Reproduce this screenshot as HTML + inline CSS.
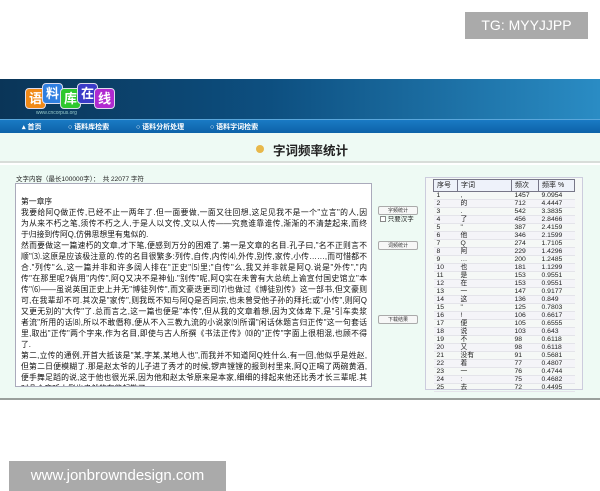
<!DOCTYPE html>
<html><head><meta charset="utf-8"><style>
*{margin:0;padding:0;box-sizing:border-box}
body{width:600px;height:480px;background:#fff;position:relative;overflow:hidden;font-family:"Liberation Sans","Noto Sans CJK SC",sans-serif}
.abs{position:absolute}
#tg{left:465px;top:12px;width:123px;height:27px;background:#aaa;color:#fff;font-size:14px;line-height:27px;text-align:center}
#ft{left:9px;top:461px;width:217px;height:30px;background:#aaa;color:#fff;font-size:15px;line-height:30px;text-align:center}
#hdr{left:0;top:79px;width:600px;height:40px;background:linear-gradient(90deg,#0a3558 0%,#0d4f80 45%,#2a8cc4 100%)}
#nav{left:0;top:119px;width:600px;height:14px;background:linear-gradient(#1a7ac4,#0d62a8);border-top:1px solid #5aa7dc}
#nav span{position:absolute;top:2px;font-size:7px;color:#fff;font-weight:bold}
#tband{left:0;top:133px;width:600px;height:30px;background:#eefaf4;border-bottom:2px solid #d8ddd9}
#main{left:0;top:165px;width:600px;height:235px;background:#eefaf4;border-bottom:2px solid #9aa09c}
.sq{position:absolute;width:21px;height:21px;border-radius:4px;color:#fff;font-size:13px;text-align:center;line-height:20px;font-weight:bold;border:1px solid #dde}
#ta{left:15px;top:183px;width:357px;height:204px;background:#fff;border:1px solid #aab;overflow:hidden;padding:12px 4px 0 5px;font-size:7.8px;line-height:11px;color:#111}
#ta div{white-space:nowrap;text-align:justify;text-align-last:justify;overflow:hidden}
#ta div.s{text-align-last:left}
.btn{position:absolute;left:378px;width:40px;height:9px;background:#f7f7f7;border:1px solid #aaa;border-radius:2px;font-size:5px;line-height:8px;text-align:center;color:#333}
#tp{left:425px;top:177px;width:158px;height:213px;border:1px solid #ccd;background:#f5f8f6}
table{position:absolute;left:433px;top:179px;width:142px;border-collapse:collapse;font-size:6.8px;color:#222}
td,th{height:8px;line-height:7px;padding:0 0 0 3px;border-bottom:1px solid #e4e4ea;text-align:left;font-weight:normal;white-space:nowrap}
th{height:12px;background:#eef2fa;border:1px solid #778;font-size:7px}
tr:nth-child(odd) td{background:#f4f4f8}
</style></head><body>
<div id="tg" class="abs">TG: MYYJJPP</div>
<div id="hdr" class="abs">
<div class="sq" style="left:25px;top:9px;background:#f08a18">语</div>
<div class="sq" style="left:42px;top:4px;background:#2f7fe0">料</div>
<div class="sq" style="left:60px;top:9px;background:#2ec82e">库</div>
<div class="sq" style="left:77px;top:4px;background:#3b3bc8">在</div>
<div class="sq" style="left:94px;top:9px;background:#b02ad0">线</div>
<div class="abs" style="left:36px;top:31px;font-size:5px;color:#9cc">www.cncorpus.org</div>
</div>
<div id="nav" class="abs"><span style="left:22px">▴ 首页</span><span style="left:68px">○ 语料库检索</span><span style="left:136px">○ 语料分析处理</span><span style="left:210px">○ 语料字词检索</span></div>
<div id="tband" class="abs"><div class="abs" style="left:256px;top:12px;width:8px;height:8px;border-radius:50%;background:#e8b84a"></div><div class="abs" style="left:273px;top:7px;font-size:12.5px;font-weight:bold;color:#222">字词频率统计</div></div>
<div id="main" class="abs"></div>
<div class="abs" style="left:16px;top:173px;font-size:6.5px;color:#222">文字内容（最长100000字）：　共 22077 字符</div>
<div id="ta" class="abs">
<div class="s">第一章序</div>
<div>我要给阿Q做正传,已经不止一两年了.但一面要做,一面又往回想,这足见我不是一个"立言"的人,因</div>
<div>为从来不朽之笔,须传不朽之人,于是人以文传,文以人传——究竟谁靠谁传,渐渐的不清楚起来,而终</div>
<div class="s">于归接到传阿Q,仿佛思想里有鬼似的.</div>
<div>然而要做这一篇速朽的文章,才下笔,便感到万分的困难了.第一是文章的名目.孔子曰,"名不正则言不</div>
<div>顺"⑶.这原是应该极注意的.传的名目很繁多:列传,自传,内传⑷,外传,别传,家传,小传……,而可惜都不</div>
<div>合."列传"么,这一篇并非和许多阔人排在"正史"⑸里;"自传"么,我又并非就是阿Q.说是"外传","内</div>
<div>传"在那里呢?倘用"内传",阿Q又决不是神仙."别传"呢,阿Q实在未曾有大总统上谕宣付国史馆立"本</div>
<div>传"⑹——虽说英国正史上并无"博徒列传",而文豪迭更司⑺也做过《博徒别传》这一部书,但文豪则</div>
<div>可,在我辈却不可.其次是"家传",则我既不知与阿Q是否同宗,也未曾受他子孙的拜托;或"小传",则阿Q</div>
<div>又更无别的"大传"了.总而言之,这一篇也便是"本传",但从我的文章着想,因为文体卑下,是"引车卖浆</div>
<div>者流"所用的话⑻,所以不敢僭称,便从不入三教九流的小说家⑼所谓"闲话休题言归正传"这一句套话</div>
<div>里,取出"正传"两个字来,作为名目,即使与古人所撰《书法正传》⑽的"正传"字面上很相混,也顾不得</div>
<div class="s">了.</div>
<div>第二,立传的通例,开首大抵该是"某,字某,某地人也",而我并不知道阿Q姓什么.有一回,他似乎是姓赵,</div>
<div>但第二日便模糊了.那是赵太爷的儿子进了秀才的时候,锣声镗镗的报到村里来,阿Q正喝了两碗黄酒,</div>
<div>便手舞足蹈的说,这于他也很光采,因为他和赵太爷原来是本家,细细的排起来他还比秀才长三辈呢.其</div>
<div class="s">时几个旁听人倒也肃然的有些起敬了.</div>
</div>
<div class="btn" style="top:206px">字频统计</div>
<div class="abs" style="left:380px;top:213px;font-size:6.5px;color:#222"><span style="display:inline-block;width:6px;height:6px;border:1px solid #888;background:#fff;vertical-align:-1px"></span> 只要汉字</div>
<div class="btn" style="top:241px">词频统计</div>
<div class="btn" style="top:315px">下载结果</div>
<div id="tp" class="abs"></div>
<table>
<tr><th style="width:24px">序号</th><th style="width:54px">字词</th><th style="width:27px">频次</th><th>频率 %</th></tr>
<tr><td>1</td><td>,</td><td>1457</td><td>9.0954</td></tr>
<tr><td>2</td><td>的</td><td>712</td><td>4.4447</td></tr>
<tr><td>3</td><td>.</td><td>542</td><td>3.3835</td></tr>
<tr><td>4</td><td>了</td><td>456</td><td>2.8466</td></tr>
<tr><td>5</td><td>"</td><td>387</td><td>2.4159</td></tr>
<tr><td>6</td><td>他</td><td>346</td><td>2.1599</td></tr>
<tr><td>7</td><td>Q</td><td>274</td><td>1.7105</td></tr>
<tr><td>8</td><td>阿</td><td>229</td><td>1.4296</td></tr>
<tr><td>9</td><td>…</td><td>200</td><td>1.2485</td></tr>
<tr><td>10</td><td>也</td><td>181</td><td>1.1299</td></tr>
<tr><td>11</td><td>是</td><td>153</td><td>0.9551</td></tr>
<tr><td>12</td><td>在</td><td>153</td><td>0.9551</td></tr>
<tr><td>13</td><td>一</td><td>147</td><td>0.9177</td></tr>
<tr><td>14</td><td>这</td><td>136</td><td>0.849</td></tr>
<tr><td>15</td><td>"</td><td>125</td><td>0.7803</td></tr>
<tr><td>16</td><td>!</td><td>106</td><td>0.6617</td></tr>
<tr><td>17</td><td>便</td><td>105</td><td>0.6555</td></tr>
<tr><td>18</td><td>说</td><td>103</td><td>0.643</td></tr>
<tr><td>19</td><td>不</td><td>98</td><td>0.6118</td></tr>
<tr><td>20</td><td>又</td><td>98</td><td>0.6118</td></tr>
<tr><td>21</td><td>没有</td><td>91</td><td>0.5681</td></tr>
<tr><td>22</td><td>着</td><td>77</td><td>0.4807</td></tr>
<tr><td>23</td><td>一</td><td>76</td><td>0.4744</td></tr>
<tr><td>24</td><td>:</td><td>75</td><td>0.4682</td></tr>
<tr><td>25</td><td>去</td><td>72</td><td>0.4495</td></tr>
</table>
<div id="ft" class="abs">www.jonbrowndesign.com</div>
</body></html>
